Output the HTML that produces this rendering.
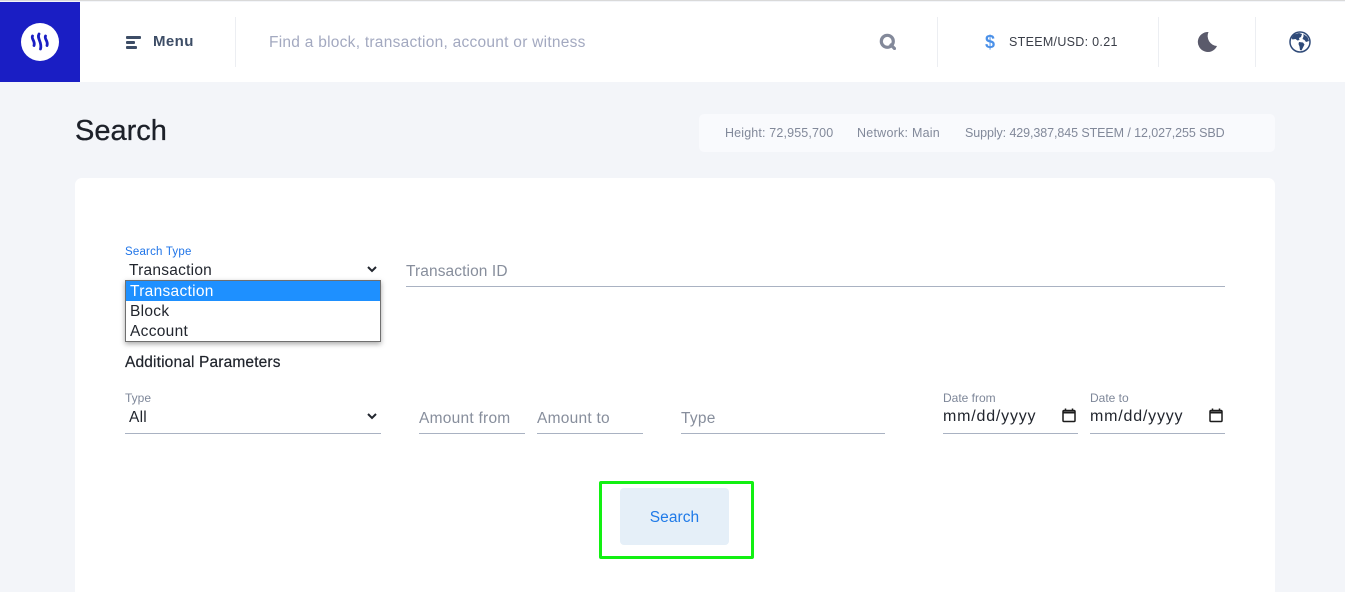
<!DOCTYPE html>
<html><head><meta charset="utf-8">
<style>
html,body{margin:0;padding:0;width:1345px;height:592px;overflow:hidden;background:#f3f5f9;font-family:"Liberation Sans",sans-serif}
.a{position:absolute;white-space:nowrap}
.line{position:absolute;height:1px;background:#a9b2c2}
.sep{position:absolute;top:17px;width:1px;height:50px;background:#eceef2}
.lab{font-size:12px;line-height:14px;color:#7e8799}
.ph{font-size:15.500px;line-height:18px;color:#878e9c;letter-spacing:.25px}
.val{font-size:15.500px;line-height:18px;color:#22262e;letter-spacing:.24px}
.date{font-size:16px;line-height:18px;color:#22262e;letter-spacing:.8px}
.opt{height:20px;color:#22262e;font-size:15.500px;line-height:22px;padding-left:4px;letter-spacing:.3px}
</style></head><body>
<div class="a" style="left:0;top:0;width:1345px;height:1px;background:#d9d9d9"></div>
<div class="a" style="left:0;top:2px;width:1345px;height:80px;background:#fff"></div>
<div class="a" style="left:0;top:2px;width:80px;height:80px;background:#1a1ec4"></div>
<svg class="a" style="left:21px;top:23px" width="38" height="38" viewBox="0 0 38 38"><circle cx="19" cy="19" r="19" fill="#fff"/><g fill="none" stroke="#1a1ec4" stroke-width="2.800" stroke-linecap="round"><path d="M11.500 13c-1.500 3 3 5 1.500 9.500"/><path d="M18 11c-2.500 4.500 3.500 8 1.500 15"/><path d="M24.500 13c-1.500 3 3 5 1.500 9.500"/></g></svg>
<svg class="a" style="left:126px;top:36px" width="15" height="13" viewBox="0 0 15 13" fill="#3d4d66"><rect x="0" y="0" width="15" height="3" rx="1"/><rect x="0" y="5" width="9" height="3" rx="1"/><rect x="0" y="10" width="11" height="3" rx="1"/></svg>
<div class="a" style="left:153px;top:33px;font-size:15px;line-height:18px;font-weight:700;color:#3d4d66;letter-spacing:.4px">Menu</div>
<div class="sep" style="left:235px"></div>
<div class="a" style="left:269px;top:34px;font-size:15.500px;line-height:18px;color:#a3a9c0;letter-spacing:.26px">Find a block, transaction, account or witness</div>
<svg class="a" style="left:879px;top:33px" width="17" height="17" viewBox="0 0 17 17" fill="none" stroke="#83899a" stroke-width="3.200"><circle cx="8.300" cy="8.300" r="6"/><path d="M12 12l3.500 3.500" stroke-linecap="round"/></svg>
<div class="sep" style="left:937px"></div>
<div class="a" style="left:985px;top:32px;font-size:18px;line-height:20px;font-weight:700;color:#4a90e8">$</div>
<div class="a" style="left:1009px;top:34px;font-size:12.500px;line-height:16px;color:#3a3e48;letter-spacing:.3px">STEEM/USD: 0.21</div>
<div class="sep" style="left:1158px"></div>
<svg class="a" style="left:1197px;top:31px" width="21" height="21" viewBox="0 0 21 21"><path d="M11.500 1A10 10 0 1 0 20 15 A10 10 0 0 1 11.500 1z" fill="#5a5a6b"/></svg>
<div class="sep" style="left:1255px"></div>
<svg class="a" style="left:1289px;top:31px" width="22" height="22" viewBox="0 0 22 22"><circle cx="11" cy="11" r="10" fill="#fff" stroke="#2f4a78" stroke-width="1.500"/><path d="M5 3.500l5-1.500 3 1-1 3-2 1 .5 2-2 .5-2-1.500-3 .5L2.500 7zM10 11l4 .5 1.500 2-1.500 3-1.500 3-1.500-.5-.5-3.500-1-2.500zM14.500 3l4 3 1.500 4-3 1-1.500-2-2-1 1-2.500z" fill="#2f4a78"/></svg>
<div class="a" style="left:75px;top:113px;font-size:29px;line-height:36px;color:#1c2029;-webkit-text-stroke:.3px #1c2029">Search</div>
<div class="a" style="left:699px;top:114px;width:576px;height:38px;background:#f9fafd;border-radius:5px"></div>
<div class="a" style="left:725px;top:126px;font-size:12.500px;line-height:15px;color:#82899a;letter-spacing:.15px">Height: 72,955,700</div>
<div class="a" style="left:857px;top:126px;font-size:12.500px;line-height:15px;color:#82899a;letter-spacing:.24px">Network: Main</div>
<div class="a" style="left:965px;top:126px;font-size:12.500px;line-height:15px;color:#82899a;letter-spacing:-.09px">Supply: 429,387,845 STEEM / 12,027,255 SBD</div>
<div class="a" style="left:75px;top:178px;width:1200px;height:414px;background:#fff;border-radius:7px 7px 0 0"></div>
<div class="a" style="left:125px;top:245px;font-size:11.500px;line-height:14px;color:#1f74e8;letter-spacing:.2px">Search Type</div>
<div class="a val" style="left:129px;top:262px">Transaction</div>
<svg class="a" style="left:367px;top:266px" width="10" height="7" viewBox="0 0 10 7" fill="none" stroke="#22262e" stroke-width="2"><path d="M1 1l4 4 4-4"/></svg>
<div class="a" style="left:406px;top:263px;font-size:15.500px;line-height:18px;color:#878e9c;letter-spacing:.1px">Transaction ID</div>
<div class="line" style="left:406px;top:286px;width:819px"></div>
<div class="a" style="left:125px;top:280px;width:254px;height:60px;background:#fff;border:1px solid #6f6f6f;box-shadow:0 2px 5px rgba(0,0,0,.35)">
<div class="opt" style="background:#1e90ff;color:#fff">Transaction</div>
<div class="opt">Block</div>
<div class="opt">Account</div>
</div>
<div class="a" style="left:125px;top:354px;font-size:15.500px;line-height:18px;color:#1f232b;letter-spacing:.15px;-webkit-text-stroke:.2px #1f232b">Additional Parameters</div>
<div class="a lab" style="left:125px;top:391px">Type</div>
<div class="a val" style="left:129px;top:409px">All</div>
<svg class="a" style="left:367px;top:413px" width="10" height="7" viewBox="0 0 10 7" fill="none" stroke="#22262e" stroke-width="2"><path d="M1 1l4 4 4-4"/></svg>
<div class="line" style="left:125px;top:433px;width:256px"></div>
<div class="a ph" style="left:419px;top:410px">Amount from</div>
<div class="line" style="left:419px;top:433px;width:106px"></div>
<div class="a ph" style="left:537px;top:410px">Amount to</div>
<div class="line" style="left:537px;top:433px;width:106px"></div>
<div class="a ph" style="left:681px;top:410px">Type</div>
<div class="line" style="left:681px;top:433px;width:204px"></div>
<div class="a lab" style="left:943px;top:391px">Date from</div>
<div class="a date" style="left:943px;top:408px">mm/dd/yyyy</div>
<svg class="a" style="left:1062px;top:408px" width="14" height="15" viewBox="0 0 14 15" fill="none" stroke="#1c1c1c" stroke-width="1.500"><rect x="1" y="2.500" width="12" height="11" rx="1"/><path d="M1 4.500h12" stroke-width="2"/><path d="M3.500 .5v2M10.500 .5v2" stroke-width="1.500"/></svg>
<div class="line" style="left:943px;top:433px;width:135px"></div>
<div class="a lab" style="left:1090px;top:391px">Date to</div>
<div class="a date" style="left:1090px;top:408px">mm/dd/yyyy</div>
<svg class="a" style="left:1209px;top:408px" width="14" height="15" viewBox="0 0 14 15" fill="none" stroke="#1c1c1c" stroke-width="1.500"><rect x="1" y="2.500" width="12" height="11" rx="1"/><path d="M1 4.500h12" stroke-width="2"/><path d="M3.500 .5v2M10.500 .5v2" stroke-width="1.500"/></svg>
<div class="line" style="left:1090px;top:433px;width:135px"></div>
<div class="a" style="left:620px;top:488px;width:109px;height:57px;background:#e5eff8;border-radius:4px;text-align:center;font-size:15.500px;line-height:60px;color:#1f7ae8;letter-spacing:.05px">Search</div>
<div class="a" style="left:599px;top:481px;width:149px;height:72px;border:3px solid #12f012;border-radius:2px"></div>
</body></html>
